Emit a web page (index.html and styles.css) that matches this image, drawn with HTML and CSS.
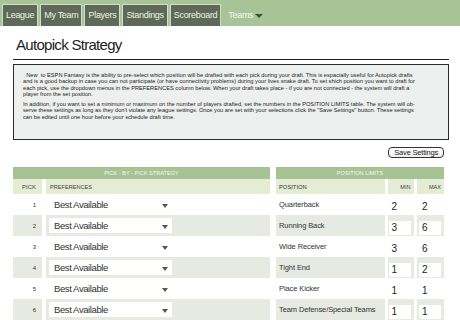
FILE: index.html
```html
<!DOCTYPE html>
<html lang="en">
<head>
    <meta charset="UTF-8">
    <title>Autopick Strategy</title>
    <link rel="stylesheet" href="styles.css">
</head>
<body>
    <nav class="topnav">
        <a class="tab" href="#">League</a>
        <a class="tab" href="#">My Team</a>
        <a class="tab" href="#">Players</a>
        <a class="tab" href="#">Standings</a>
        <a class="tab" href="#">Scoreboard</a>
        <span class="tab-menu">Teams<span class="caret"></span></span>
    </nav>

    <main class="page">
        <h1 class="page-title">Autopick Strategy</h1>

        <div class="info-box">
            <p>&nbsp;&nbsp;New&nbsp; to ESPN Fantasy is the ability to pre-select which position will be drafted with each pick during your draft. This is espacially useful for Autopick drafts<br>
            and is a good backup in case you can not participate (or have connectivity problems) during your lives snake draft. To set shich position you want to draft for<br>
            each pick, use the dropdown menus in the PREFERENCES column below. When your draft takes place - if you are not connected - the system will draft a<br>
            player from the set position.</p>
            <p>In addition, if you want to set a minimum or maximum on the number of players drafted, set the numbers in the POSITION LIMITS table. The system will ob-<br>
            serve these settings as long as they don't violate any league settings. Once you are set with your selections click the "Save Settings" button. These settings<br>
            can be edited until one hour before your schedule draft time.</p>
        </div>

        <div class="actions">
            <button class="save-btn">Save Settings</button>
        </div>

        <div class="tables">
            <table class="strategy">
                <tr><th class="head" colspan="2">PICK - BY - PICK STRATEGY</th></tr>
                <tr class="sub"><td class="pick">PICK</td><td>PREFERENCES</td></tr>
                <tr><td class="pick">1</td><td><div class="select">Best Available<span class="arrow"></span></div></td></tr>
                <tr class="alt"><td class="pick">2</td><td><div class="select">Best Available<span class="arrow"></span></div></td></tr>
                <tr><td class="pick">3</td><td><div class="select">Best Available<span class="arrow"></span></div></td></tr>
                <tr class="alt"><td class="pick">4</td><td><div class="select">Best Available<span class="arrow"></span></div></td></tr>
                <tr><td class="pick">5</td><td><div class="select">Best Available<span class="arrow"></span></div></td></tr>
                <tr class="alt"><td class="pick">6</td><td><div class="select">Best Available<span class="arrow"></span></div></td></tr>
            </table>

            <table class="limits">
                <tr><th class="head" colspan="3">POSITION LIMITS</th></tr>
                <tr class="sub"><td class="pos">POSITION</td><td class="num">MIN</td><td class="num">MAX</td></tr>
                <tr><td class="pos">Quarterback</td><td class="num"><span class="box">2</span></td><td class="num"><span class="box">2</span></td></tr>
                <tr class="alt"><td class="pos">Running Back</td><td class="num"><span class="box">3</span></td><td class="num"><span class="box">6</span></td></tr>
                <tr><td class="pos">Wide Receiver</td><td class="num"><span class="box">3</span></td><td class="num"><span class="box">6</span></td></tr>
                <tr class="alt"><td class="pos">Tight End</td><td class="num"><span class="box">1</span></td><td class="num"><span class="box">2</span></td></tr>
                <tr><td class="pos">Place Kicker</td><td class="num"><span class="box">1</span></td><td class="num"><span class="box">1</span></td></tr>
                <tr class="alt"><td class="pos">Team Defense/Special Teams</td><td class="num"><span class="box">1</span></td><td class="num"><span class="box">1</span></td></tr>
            </table>
        </div>
    </main>
</body>
</html>
```

FILE: styles.css
```css
* {
    margin: 0;
    padding: 0;
    box-sizing: border-box;
}

body {
    font-family: "Liberation Sans", Arial, sans-serif;
    background: #fff;
    color: #333;
    overflow: hidden;
}

/* top navigation */
.topnav {
    height: 26px;
    background: #a8c496;
    display: flex;
    align-items: flex-end;
    padding-left: 2px;
    gap: 2px;
}

.tab {
    height: 22px;
    line-height: 21px;
    padding: 0 3px;
    background: #5e6957;
    border: 1px solid #d3dccb;
    border-bottom: none;
    color: #eef2ea;
    font-size: 9px;
    letter-spacing: -0.3px;
    text-decoration: none;
}

.tab-menu {
    height: 22px;
    line-height: 21px;
    padding: 0 5px;
    color: #f4f7f1;
    font-size: 9px;
    letter-spacing: -0.3px;
    display: flex;
    align-items: center;
}

.caret {
    display: inline-block;
    margin-left: 2px;
    margin-top: 2px;
    border-left: 4px solid transparent;
    border-right: 4px solid transparent;
    border-top: 4px solid #3f4f38;
}

/* page body */
.page {
    padding: 0 11px 0 13px;
}

.page-title {
    font-size: 15px;
    letter-spacing: -0.7px;
    font-weight: normal;
    color: #222;
    line-height: 20px;
    padding: 9px 3px 4px;
    border-bottom: 1.5px solid #222;
}

.info-box {
    margin-top: 4px;
    height: 76px;
    background: #eef0ef;
    border: 1.5px solid #2b2b2b;
    padding: 7px 9px 0;
    font-size: 5.7px;
    line-height: 6.3px;
    color: #222;
    white-space: nowrap;
    overflow: hidden;
}

.info-box p + p {
    margin-top: 4px;
}

.actions {
    display: flex;
    justify-content: flex-end;
    padding-right: 5px;
    margin-top: 7px;
}

.save-btn {
    font-family: inherit;
    font-size: 7.5px;
    letter-spacing: -0.2px;
    height: 11px;
    line-height: 9px;
    padding: 0 5px;
    border: 1px solid #333;
    border-radius: 4px;
    background: linear-gradient(#fff, #eee);
    color: #222;
}

/* tables */
.tables {
    display: flex;
    gap: 6px;
    margin-top: 9px;
}

table {
    border-collapse: collapse;
}

.strategy {
    width: 257px;
}

.limits {
    width: 168px;
}

.head {
    height: 12px;
    background: #a7c393;
    color: #f4f7f0;
    font-size: 5.6px;
    font-weight: normal;
    text-align: center;
}

td {
    height: 21px;
    padding: 0;
    vertical-align: middle;
}

.sub td {
    height: 15px;
    background: #e4ecd4;
    font-size: 5.6px;
    color: #444;
}

.alt td {
    background: #e7eae2;
}

.strategy .pick {
    width: 31px;
    padding-right: 6px;
    text-align: right;
    font-size: 6px;
    border-right: 4px solid #fff;
}

.strategy .sub td:last-child {
    padding-left: 4px;
}

.select {
    width: 123px;
    height: 15px;
    margin-left: 3px;
    padding-left: 5px;
    background: #fff;
    font-size: 9.5px;
    letter-spacing: -0.4px;
    line-height: 15px;
    color: #333;
    display: flex;
    align-items: center;
    justify-content: space-between;
}

.arrow {
    border-left: 3.5px solid transparent;
    border-right: 3.5px solid transparent;
    border-top: 4px solid #555;
    margin-right: 4px;
    margin-top: 2px;
}

.limits .pos {
    padding-left: 3px;
    font-size: 7.5px;
    letter-spacing: -0.1px;
    color: #333;
}

.limits .sub .pos {
    font-size: 5.8px;
    letter-spacing: 0;
}

.limits .num {
    width: 29px;
    text-align: right;
    padding-right: 3px;
    border-left: 3px solid #fff;
}

.box {
    display: inline-block;
    width: 22px;
    height: 14px;
    line-height: 14px;
    padding-left: 3px;
    text-align: left;
    background: #fff;
    font-size: 10px;
    color: #222;
}
```
